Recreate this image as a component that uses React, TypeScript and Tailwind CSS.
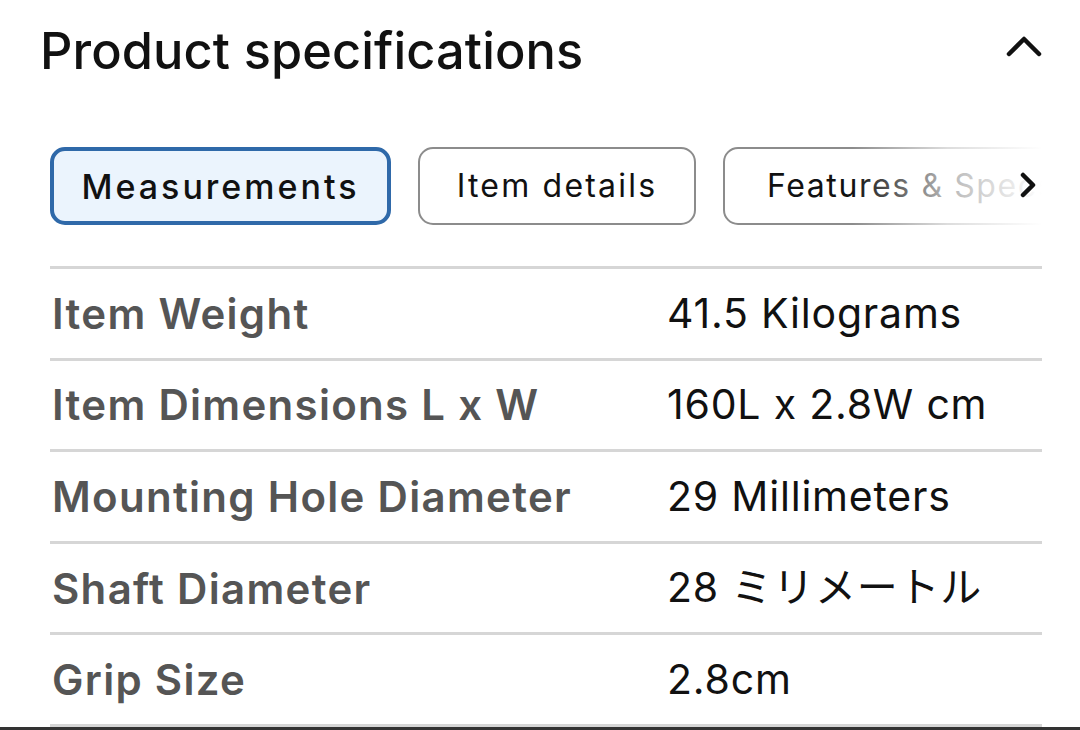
import React from "react";

const specs = [
  { label: "Item Weight", value: "41.5 Kilograms" },
  { label: "Item Dimensions L x W", value: "160L x 2.8W cm" },
  { label: "Mounting Hole Diameter", value: "29 Millimeters" },
  { label: "Shaft Diameter", value: "28 ミリメートル" },
  { label: "Grip Size", value: "2.8cm" },
];

export default function App() {
  return (
    <div
      className="relative w-[1080px] h-[730px] overflow-hidden bg-white"
      style={{ fontFamily: "Inter, 'Noto Sans CJK JP', sans-serif" }}
    >
      {/* Header */}
      <div className="flex items-center justify-between pl-[40px] pr-[38px] pt-[22px] h-[80px]">
        <h2 className="text-[50.5px] leading-none font-medium text-[#111] tracking-[0.1px]">
          Product specifications
        </h2>
        <svg width="36" height="22" viewBox="0 0 36 22" className="mt-[-10px]">
          <path
            d="M3 19 L18 4 L33 19"
            fill="none"
            stroke="#111"
            strokeWidth="4.5"
            strokeLinecap="round"
            strokeLinejoin="round"
          />
        </svg>
      </div>

      {/* Tabs */}
      <div className="relative mt-[67px] ml-[50px] w-[992px] h-[78px] overflow-hidden">
        <div className="flex gap-[27px] h-full">
          <button className="shrink-0 h-full w-[341px] rounded-[15px] border-[4px] border-[#2f69a9] bg-[#ebf4fd] text-[34px] font-medium text-[#111] tracking-[3px]">
            Measurements
          </button>
          <button className="shrink-0 h-full w-[278px] rounded-[15px] border-[2px] border-[#8c8c8c] bg-white text-[32px] text-[#111] tracking-[2.2px]">
            Item details
          </button>
          <button className="shrink-0 h-full w-[360px] rounded-[15px] border-[2px] border-[#8c8c8c] bg-white text-[32px] text-[#111] tracking-[1.6px] text-left pl-[42px] whitespace-nowrap">
            Features &amp; Specs
          </button>
        </div>
        <div className="absolute right-0 top-0 h-full w-[190px] bg-gradient-to-r from-white/0 via-white/70 to-white" />
        <svg
          width="18"
          height="26"
          viewBox="0 0 18 26"
          className="absolute right-[5px] top-[25px]"
        >
          <path
            d="M4 3 L14 13 L4 23"
            fill="none"
            stroke="#111"
            strokeWidth="4.5"
            strokeLinecap="round"
            strokeLinejoin="round"
          />
        </svg>
      </div>

      {/* Spec table */}
      <div className="mt-[41px] ml-[50px] w-[992px] border-t-[3px] border-[#d6d6d6]">
        {specs.map((s) => (
          <div
            key={s.label}
            className="flex items-center h-[91.6px] border-b-[3px] border-[#d6d6d6]"
          >
            <div className="w-[617px] pl-[2px] text-[42px] font-semibold text-[#555] tracking-[1.3px]">
              {s.label}
            </div>
            <div className="text-[41px] text-[#111] tracking-[0.8px]">{s.value}</div>
          </div>
        ))}
      </div>

      <div className="absolute left-0 bottom-0 w-full h-[3px] bg-[#333]" />
    </div>
  );
}
